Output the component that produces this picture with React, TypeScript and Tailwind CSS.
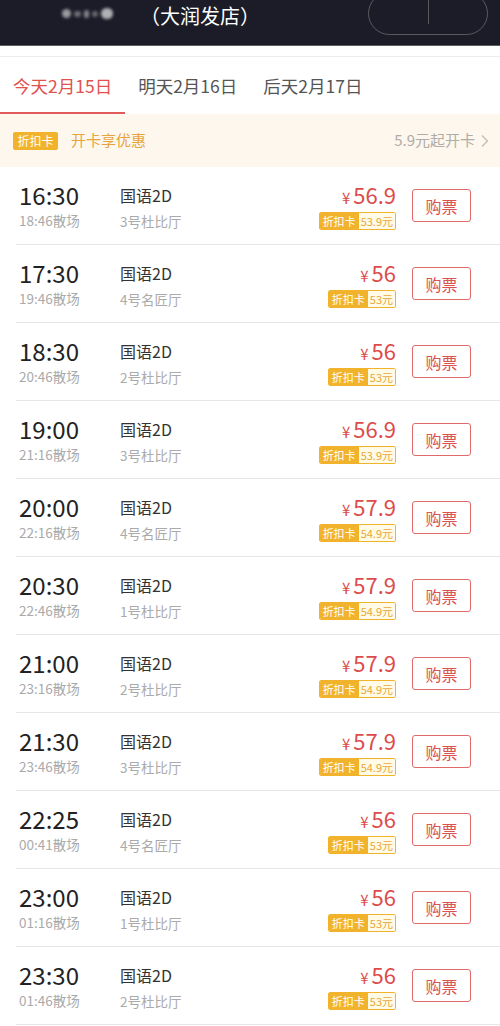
const FONT = '"Noto Sans CJK SC", "Noto Sans", sans-serif';

type Show = {
  start: string;
  end: string;
  hall: string;
  price: string;
  card: string;
};

const shows: Show[] = [
  { start: '16:30', end: '18:46', hall: '3号杜比厅', price: '56.9', card: '53.9' },
  { start: '17:30', end: '19:46', hall: '4号名匠厅', price: '56', card: '53' },
  { start: '18:30', end: '20:46', hall: '2号杜比厅', price: '56', card: '53' },
  { start: '19:00', end: '21:16', hall: '3号杜比厅', price: '56.9', card: '53.9' },
  { start: '20:00', end: '22:16', hall: '4号名匠厅', price: '57.9', card: '54.9' },
  { start: '20:30', end: '22:46', hall: '1号杜比厅', price: '57.9', card: '54.9' },
  { start: '21:00', end: '23:16', hall: '2号杜比厅', price: '57.9', card: '54.9' },
  { start: '21:30', end: '23:46', hall: '3号杜比厅', price: '57.9', card: '54.9' },
  { start: '22:25', end: '00:41', hall: '4号名匠厅', price: '56', card: '53' },
  { start: '23:00', end: '01:16', hall: '1号杜比厅', price: '56', card: '53' },
  { start: '23:30', end: '01:46', hall: '2号杜比厅', price: '56', card: '53' },
];

const tabs = ['今天2月15日', '明天2月16日', '后天2月17日'];

function ShowRow({ s }: { s: Show }) {
  return (
    <div className="ml-4 flex h-[78px] items-center border-b border-[#e6e6e6] pl-[3px] pr-[29px]">
      {/* time */}
      <div className="flex w-[101px] flex-col">
        <span className="text-[24px] leading-[26px] text-[#222]">{s.start}</span>
        <span className="mt-[3px] text-[13.5px] leading-[18px] text-[#aaa]">{s.end}散场</span>
      </div>
      {/* hall */}
      <div className="flex flex-1 flex-col pt-[5px]">
        <span className="text-[16px] leading-[22px] text-[#333]">国语2D</span>
        <span className="mt-[4px] text-[13.5px] leading-[22px] text-[#aaa]">{s.hall}</span>
      </div>
      {/* price */}
      <div className="flex flex-col items-end">
        <div className="flex items-baseline text-[#dc4c4c]">
          <span className="mr-[3px] text-[15px] leading-[26px]">¥</span>
          <span className="text-[22px] leading-[26px]">{s.price}</span>
        </div>
        <div className="mt-[1px] flex h-[18px] overflow-hidden rounded-[2px] border border-[#f2b32c] text-[11px] leading-[16px]">
          <span className="bg-[#f2b32c] px-[3px] text-white">折扣卡</span>
          <span className="bg-[#fffbe6] px-[2px] text-[#e9a63a]">{s.card}元</span>
        </div>
      </div>
      <button className="ml-4 flex h-[33px] w-[59px] items-center justify-center rounded-[3px] border-[1.5px] border-[#e06a6a] text-[16px] text-[#d9534f]">
        购票
      </button>
    </div>
  );
}

export default function App() {
  return (
    <div className="min-h-[1026px] w-[500px] overflow-hidden bg-white" style={{ fontFamily: FONT }}>
      {/* Header */}
      <div className="flex h-[46px] items-start overflow-hidden border-b border-[#5d5d60] bg-[#1b1c28]">
        <div className="mt-[8px] ml-[62px] flex w-[51px] items-center gap-[3px] blur-[1.5px]">
          <span className="h-[9px] w-[9px] rounded-full bg-[#9a9aa0]" />
          <span className="h-[6px] w-[7px] rounded-full bg-[#6f6f76]" />
          <span className="h-[8px] w-[6px] rounded-full bg-[#85858c]" />
          <span className="h-[6px] w-[6px] rounded-full bg-[#6a6a70]" />
          <span className="h-[11px] w-[12px] rounded-full bg-[#b0b0b5]" />
        </div>
        <span className="mt-[3px] ml-[27px] text-[20px] leading-[26px] text-white">（大润发店）</span>
        <div className="mt-[-8px] mr-[12px] ml-auto flex h-[43px] w-[120px] items-center rounded-full border border-[#5a5a5e]">
          <div className="flex-1" />
          <div className="mt-[6px] h-[25px] w-px self-start bg-[#5a5a5e]" />
          <div className="flex-1" />
        </div>
      </div>

      {/* spacer */}
      <div className="h-[11px] border-b border-[#ececec]" />

      {/* Tabs */}
      <div className="flex h-[57px] bg-white">
        {tabs.map((t, i) => (
          <div
            key={t}
            className={`flex items-center border-b-2 px-[13px] pt-[3px] text-[17.5px] ${
              i === 0 ? 'border-[#e25b5b] text-[#e25050]' : 'border-transparent text-[#555]'
            }`}
          >
            {t}
          </div>
        ))}
      </div>

      {/* Promo */}
      <div className="flex h-[53px] items-center bg-[#fdf7ee] pr-[10px] pl-[13px]">
        <span className="flex h-[18px] w-[45px] items-center justify-center rounded-[2px] bg-[#f2b32c] text-[12px] text-white">
          折扣卡
        </span>
        <span className="ml-[13px] text-[15px] text-[#e8a43c]">开卡享优惠</span>
        <span className="ml-auto text-[15px] text-[#b0aca6]">5.9元起开卡</span>
        <svg width="10" height="14" viewBox="0 0 10 14" className="ml-[5px]">
          <path d="M2 1.5 L7.5 7 L2 12.5" fill="none" stroke="#c0bcb6" strokeWidth="1.3" />
        </svg>
      </div>

      {/* Show list */}
      <div>
        {shows.map((s) => (
          <ShowRow key={s.start} s={s} />
        ))}
      </div>
    </div>
  );
}
